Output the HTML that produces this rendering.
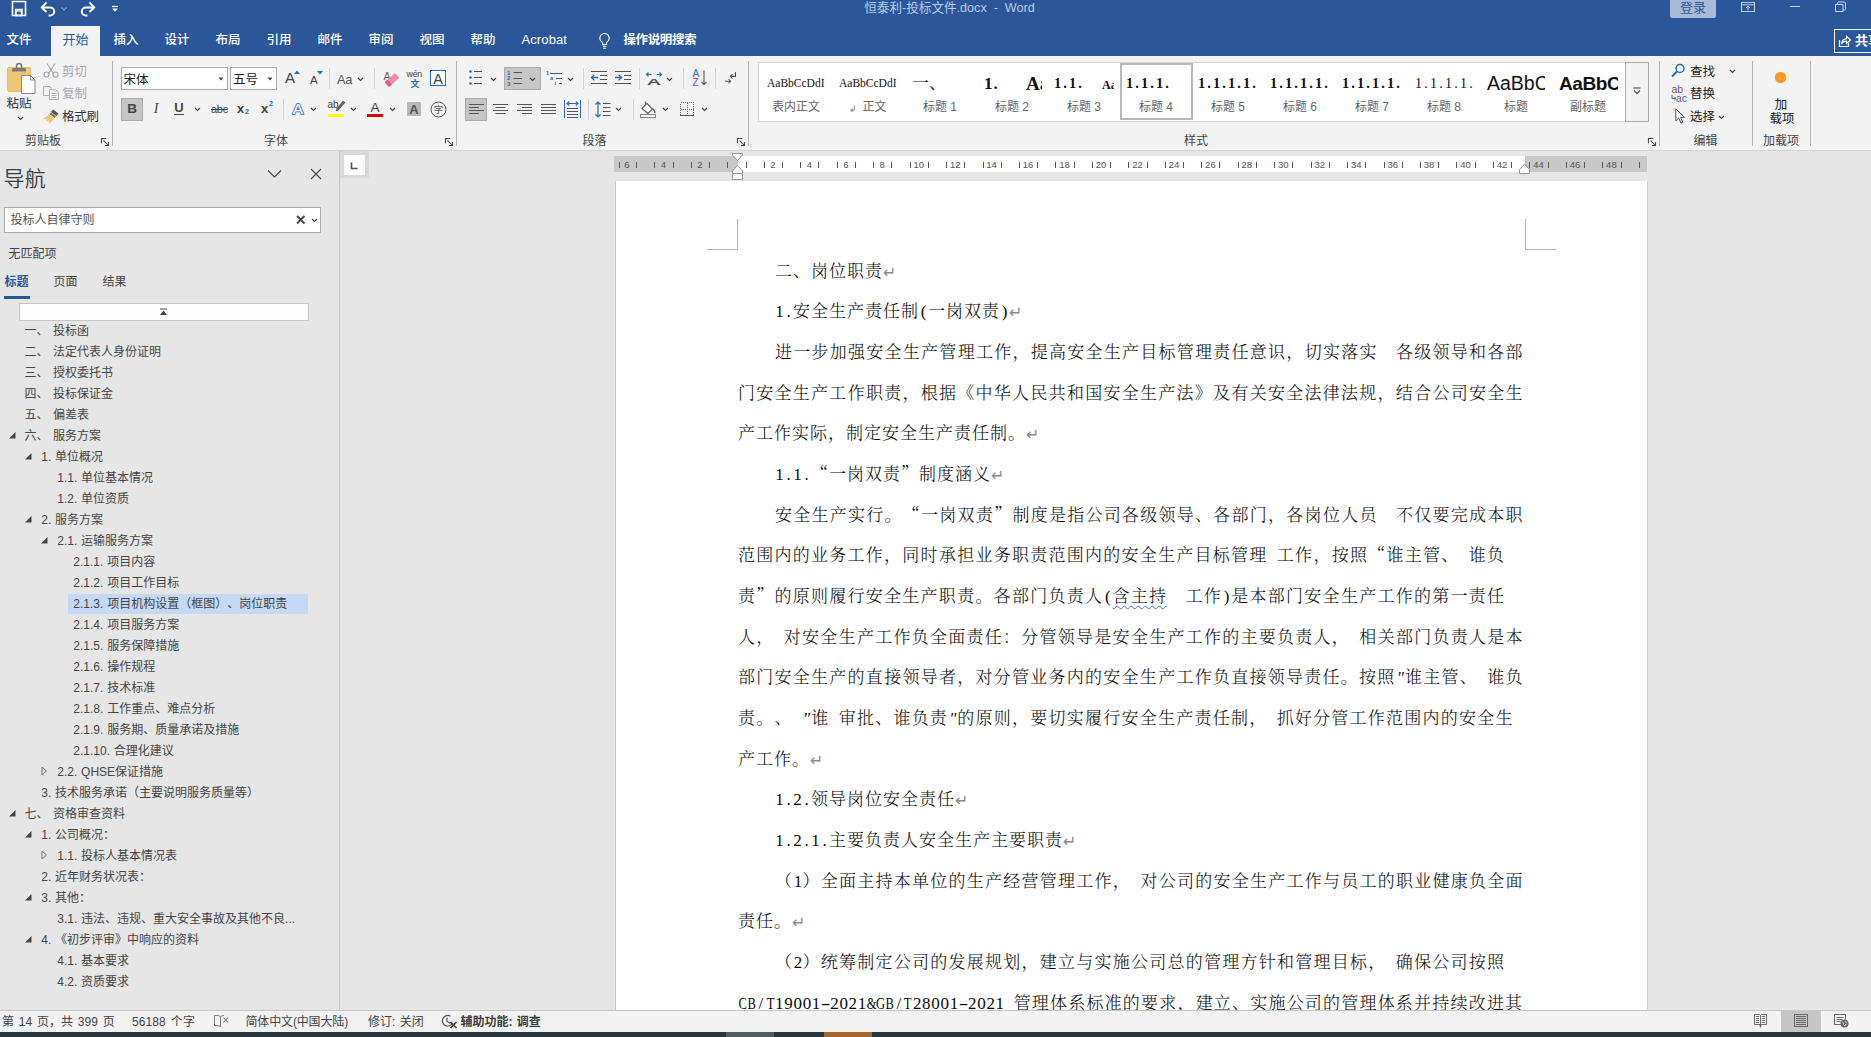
<!DOCTYPE html>
<html lang="zh-CN">
<head>
<meta charset="utf-8">
<title>恒泰利-投标文件.docx - Word</title>
<style>
*{box-sizing:border-box;margin:0;padding:0}
html,body{width:1871px;height:1037px;overflow:hidden;background:#e6e6e6}
body{position:relative;text-spacing-trim:space-all;font-family:"Liberation Sans","Noto Sans CJK SC",sans-serif;font-size:12px;color:#444;-webkit-font-smoothing:antialiased}
.abs{position:absolute}
svg{position:absolute;overflow:visible}
/* ---------- title bar ---------- */
#titlebar{position:absolute;left:0;top:0;width:1871px;height:56px;background:#2b579a}
#title{position:absolute;left:0;width:1871px;top:0;height:17px;line-height:17px;text-align:center;color:#bccae3;font-size:12.6px;padding-left:28px;white-space:pre}
#login{position:absolute;left:1670px;top:-2px;width:46px;height:20px;background:#a9bbd8;border-radius:2px;color:#2b579a;font-size:13px;line-height:19px;text-align:center}
.tab{position:absolute;top:26px;height:30px;line-height:28px;color:#fff;font-size:13px;white-space:nowrap;font-weight:500}
#tabhome{position:absolute;left:51px;top:26px;width:49px;height:30px;background:#f3f3f3;color:#2b579a;font-size:13px;line-height:28px;text-align:center}
#share{position:absolute;left:1834px;top:29px;width:50px;height:24px;border:1px solid #fff;color:#fff;font-size:13px;font-weight:bold;line-height:21px;padding-left:20px}
/* ---------- ribbon ---------- */
#ribbon{position:absolute;left:0;top:56px;width:1871px;height:95px;background:#f3f3f3;border-bottom:1px solid #d4d4d4}
.glabel{position:absolute;top:132px;height:16px;line-height:16px;font-size:12px;color:#444;white-space:nowrap}
.gsep{position:absolute;top:62px;width:1px;height:83px;background:#c8c8c8}
.rt{position:absolute;white-space:nowrap;font-size:12px;color:#333;line-height:16px}
.dis{color:#a6a6a6}
/* ---------- nav pane ---------- */
#nav{position:absolute;left:0;top:151px;width:340px;height:859px;background:#e6e6e6;border-right:1px solid #c6c6c6}
.ni{position:absolute;height:21px;line-height:21px;font-size:12px;color:#444;white-space:nowrap}
/* ---------- doc ---------- */
#page{position:absolute;left:616px;top:181px;width:1031px;height:829px;background:#fff}
.dl{position:absolute;width:900px;height:41px;line-height:41px;font-family:"Liberation Serif","Noto Serif CJK SC",serif;font-size:17px;font-weight:300;color:#0a0a0a;white-space:nowrap;overflow:hidden;text-spacing-trim:space-all;font-kerning:none;--e:0px;letter-spacing:calc(1px + var(--e))}
.dl i{font-style:normal}
.h{display:inline-flex;justify-content:center;width:calc(9px + var(--e));letter-spacing:0;white-space:pre;line-height:1}
.hc{transform:scaleX(.74)}
.hy{transform:scaleX(1.7)}
.f{display:inline-block;width:calc(18px + var(--e));letter-spacing:0;white-space:pre;line-height:1}
.q{font-family:"Noto Serif CJK SC",serif;display:inline-block;width:calc(18px + var(--e));letter-spacing:0;text-spacing-trim:space-all;line-height:1}
.pm{color:#8a8a8a;font-family:"DejaVu Sans",sans-serif;font-size:16px;font-weight:400;letter-spacing:0;margin-left:0;position:relative;top:1px}
.wavy{text-decoration:underline wavy #3a6fd8;text-decoration-thickness:1px;text-underline-offset:3px}
/* ---------- status bar ---------- */
#status{position:absolute;left:0;top:1010px;width:1871px;height:22px;background:#f3f3f3;border-top:1px solid #c6c6c6}
.st{position:absolute;top:1014px;height:16px;line-height:16px;font-size:12px;color:#444;white-space:nowrap}
#taskbar{position:absolute;left:0;top:1032px;width:1871px;height:5px;background:#27373e}
</style>
</head>
<body>
<!-- TITLEBAR -->
<div id="titlebar"></div>
<div id="title">恒泰利-投标文件.docx  -  Word</div>
<div id="login">登录</div>
<!--TABS-->
<div class="tab" style="left:6.5px;font-size:12.5px">文件</div>
<div class="tab" style="left:113.5px;font-size:12.5px">插入</div>
<div class="tab" style="left:164.5px;font-size:12.5px">设计</div>
<div class="tab" style="left:215.5px;font-size:12.5px">布局</div>
<div class="tab" style="left:266.5px;font-size:12.5px">引用</div>
<div class="tab" style="left:317.5px;font-size:12.5px">邮件</div>
<div class="tab" style="left:368.5px;font-size:12.5px">审阅</div>
<div class="tab" style="left:419.5px;font-size:12.5px">视图</div>
<div class="tab" style="left:470.5px;font-size:12.5px">帮助</div>
<div id="tabhome">开始</div>
<div class="tab" style="left:521.5px;font-size:13px;letter-spacing:0.1px">Acrobat</div>
<div class="tab" style="left:623.5px;font-size:12.5px;font-weight:bold;letter-spacing:-0.4px">操作说明搜索</div>
<svg style="left:597px;top:32px" width="15" height="18" viewBox="0 0 15 18"><path d="M7.5 1.5a4.6 4.6 0 0 0-2.6 8.4c.5.5.8 1.2.8 2v.6h3.6v-.6c0-.8.3-1.5.8-2A4.6 4.6 0 0 0 7.5 1.5z" fill="none" stroke="#fff" stroke-width="1.1"/><path d="M5.7 14.3h3.6M6.2 16.2h2.6" stroke="#fff" stroke-width="1.1" fill="none"/></svg>
<svg style="left:10px;top:0px" width="18" height="18" viewBox="0 0 18 18"><path d="M2.5 1.5h13v14h-13z" fill="none" stroke="#fff" stroke-width="1.6"/><path d="M5 9.5h8M6 11v4.5h5.5V11" fill="none" stroke="#fff" stroke-width="1.4"/><rect x="5.5" y="11" width="6.5" height="4.5" fill="none" stroke="#fff" stroke-width="1.3"/></svg>
<svg style="left:40px;top:1px" width="18" height="16" viewBox="0 0 18 16"><path d="M2 6.5h8.2a4 4 0 0 1 0 8H8.5" fill="none" stroke="#fff" stroke-width="2"/><path d="M6.5 1.5L1.8 6.5l4.7 4.4" fill="none" stroke="#fff" stroke-width="2"/></svg>
<svg style="left:60px;top:6px" width="8" height="6" viewBox="0 0 8 6"><path d="M1.5 1.5L4 4l2.5-2.5" fill="none" stroke="#8fa6cf" stroke-width="1.1"/></svg>
<svg style="left:78px;top:1px" width="18" height="16" viewBox="0 0 18 16"><path d="M16 6.5H7.8a4 4 0 0 0 0 8h1.7" fill="none" stroke="#fff" stroke-width="2"/><path d="M11.5 1.5l4.7 5-4.7 4.4" fill="none" stroke="#fff" stroke-width="2"/></svg>
<svg style="left:111px;top:5px" width="8" height="8" viewBox="0 0 8 8"><path d="M1 1.5h6" stroke="#fff" stroke-width="1.2"/><path d="M1 3.6h6L4 6.8z" fill="#fff"/></svg>
<svg style="left:1741px;top:2px" width="14" height="10" viewBox="0 0 14 11" preserveAspectRatio="none"><rect x="0.5" y="0.5" width="13" height="10" fill="none" stroke="#c9d5ea" stroke-width="1"/><path d="M0.5 3h13M7 9V4.5M5 6.5l2-2 2 2" fill="none" stroke="#c9d5ea" stroke-width="1"/></svg>
<div class="abs" style="left:1790px;top:6px;width:10px;height:1px;background:#c9d5ea"></div>
<svg style="left:1835px;top:1px" width="12" height="11" viewBox="0 0 12 11"><path d="M0.5 3.5h7.5v7h-7.5z" fill="none" stroke="#c9d5ea" stroke-width="1"/><path d="M2.5 3.5V2.2a1.2 1.2 0 0 1 1.2-1.2h5.6a1.2 1.2 0 0 1 1.2 1.2v5.6a1.2 1.2 0 0 1-1.2 1.2H8" fill="none" stroke="#c9d5ea" stroke-width="1"/></svg>
<div id="share">共享</div>
<svg style="left:1838px;top:34px" width="14" height="14" viewBox="0 0 14 14"><path d="M1.5 6v6.5h9V9" fill="none" stroke="#fff" stroke-width="1.2"/><path d="M3.5 10c.3-3 2.2-5 5-5.2V2.2L12.5 6 8.500 9.500V7c-2-.1-3.700.800-5 3z" fill="none" stroke="#fff" stroke-width="1.1"/></svg>

<!--RIBBON-->
<div id="ribbon"></div>
<!--RIB1-->
<svg style="left:7px;top:63px" width="30" height="32" viewBox="0 0 30 32"><rect x="0.500" y="4.500" width="23" height="24" rx="1.500" fill="#f0c674" stroke="#ebbd63"/><path d="M5 8.500v-2a1.500 1.500 0 0 1 1.500-1.500h11a1.500 1.500 0 0 1 1.500 1.500v2z" fill="#7a7a7a"/><path d="M9.500 5V3a2.500 2.500 0 0 1 5 0v2" fill="none" stroke="#7a7a7a" stroke-width="1.600"/><path d="M14.500 12.500h9l4.500 4.500V30.500h-13.500z" fill="#fff" stroke="#8a8a8a"/><path d="M23.500 12.500v4.500h4.500" fill="none" stroke="#8a8a8a"/></svg>
<div class="rt" style="left:6.5px;top:96.3px;font-size:12.5px;color:#333">粘贴</div>
<svg style="left:16.5px;top:116px" width="7" height="5" viewBox="0 0 7 5"><path d="M1 1l2.500 2.500L6 1" fill="none" stroke="#444" stroke-width="1.1"/></svg>
<svg style="left:43px;top:63px" width="16" height="15" viewBox="0 0 16 15"><path d="M4 0.500l6.500 10M12 0.500L5.500 10.500" stroke="#a6a6a6" stroke-width="1.200" fill="none"/><circle cx="3.500" cy="11.500" r="2.500" fill="none" stroke="#a6a6a6" stroke-width="1.200"/><circle cx="12.500" cy="11.500" r="2.500" fill="none" stroke="#a6a6a6" stroke-width="1.200"/></svg>
<div class="rt" style="left:62px;top:63.8px;color:#a6a6a6;font-size:12.500px">剪切</div>
<svg style="left:43px;top:86px" width="16" height="14" viewBox="0 0 16 14"><path d="M0.500 0.500h6l2 2V9.500h-8z" fill="#f3f3f3" stroke="#b0b0b0"/><path d="M6.500 3.500h6l3 3V13.500h-9z" fill="#f3f3f3" stroke="#b0b0b0"/><path d="M8.500 7.500h5M8.500 9.500h5M8.500 11.500h5" stroke="#b0b0b0" stroke-width="1"/></svg>
<div class="rt" style="left:62px;top:86.3px;color:#a6a6a6;font-size:12.500px">复制</div>
<svg style="left:43px;top:108px" width="17" height="16" viewBox="0 0 17 16"><path d="M10 1.500l5.500 4-2 2.500-5.500-4z" fill="#555"/><path d="M8 4.500l5 3.700-1.300 1.800-5-3.700z" fill="#777"/><path d="M6.500 6.500l5 3.700-4.500 5.300-1.500-1 1-1.500-2 .5-1.500-1 1-1.500-2.500.300-1-.800z" fill="#f0c674"/></svg>
<div class="rt" style="left:62px;top:109.1px;font-size:12.500px;color:#333;letter-spacing:-0.300px">格式刷</div>
<div class="rt" style="left:25px;top:133.0px;color:#444">剪贴板</div>
<svg style="left:100.5px;top:138.0px" width="8" height="8" viewBox="0 0 9 9"><path d="M0.500 6V0.500H6" fill="none" stroke="#444" stroke-width="1.150"/><path d="M3 3l5 5M8.500 4.500v4h-4" fill="none" stroke="#444" stroke-width="1.150"/></svg>
<div class="abs" style="left:112px;top:61px;width:1px;height:85px;background:#b4b4b4"></div>
<div class="abs" style="left:121px;top:67px;width:107px;height:23px;background:#fff;border:1px solid #ababab"></div>
<div class="rt" style="left:123.5px;top:71.8px;color:#222;font-size:12.5px">宋体</div>
<svg style="left:217.5px;top:77.0px" width="6" height="4" viewBox="0 0 6 4"><path d="M0.500 0.500h5L3 3.500z" fill="#444"/></svg>
<div class="abs" style="left:230px;top:67px;width:47px;height:23px;background:#fff;border:1px solid #ababab"></div>
<div class="rt" style="left:233px;top:71.8px;color:#222;font-size:12.5px">五号</div>
<svg style="left:266.5px;top:77.0px" width="6" height="4" viewBox="0 0 6 4"><path d="M0.500 0.500h5L3 3.500z" fill="#444"/></svg>
<div class="rt" style="left:285px;top:69px;font-size:15px;line-height:18px;color:#444">A</div>
<svg style="left:294px;top:70px" width="6" height="4" viewBox="0 0 6 4"><path d="M0 4L3 0.500 6 4z" fill="#2b6cb8"/></svg>
<div class="rt" style="left:310px;top:72px;font-size:11.500px;line-height:16px;color:#444">A</div>
<svg style="left:317px;top:70.5px" width="6" height="4" viewBox="0 0 6 4"><path d="M0 0L3 3.500 6 0z" fill="#2b6cb8"/></svg>
<div class="abs" style="left:329px;top:68px;width:1px;height:21px;background:#d4d4d4"></div>
<div class="rt" style="left:337px;top:70.500px;font-size:12.800px;line-height:18px;color:#555;letter-spacing:-0.300px">Aa</div>
<svg style="left:357.0px;top:76.5px" width="7" height="5" viewBox="0 0 7 5"><path d="M1 1l2.500 2.500L6 1" fill="none" stroke="#444" stroke-width="1.1"/></svg>
<div class="abs" style="left:374px;top:68px;width:1px;height:21px;background:#d4d4d4"></div>
<div class="rt" style="left:383.500px;top:69px;font-size:10.500px;line-height:14px;color:#666">A</div>
<svg style="left:384px;top:72px" width="16" height="15" viewBox="0 0 16 15"><g transform="rotate(-42 8 8)"><rect x="1" y="4.700" width="14" height="6.600" rx="1.200" fill="#ef8fa3"/><rect x="1" y="4.700" width="4" height="6.600" rx="1.200" fill="#e5607c"/></g></svg>
<div class="rt" style="left:406.500px;top:68px;font-size:8.800px;line-height:12px;color:#444;letter-spacing:-0.200px">wén</div>
<div class="rt" style="left:410.500px;top:77.500px;font-size:9px;line-height:12px;color:#2b6cb8;font-weight:bold">文</div>
<div class="abs" style="left:430px;top:70px;width:16px;height:16px;border:1px solid #2b6cb8;background:#fff"></div>
<div class="rt" style="left:430px;top:70.500px;width:16px;text-align:center;font-size:14.500px;line-height:16px;color:#444">A</div>
<div class="abs" style="left:121px;top:98px;width:22px;height:23px;background:#c6c6c6;border:1px solid #ababab"></div>
<div class="rt" style="left:121px;top:101px;width:22px;text-align:center;font-size:13.500px;line-height:16px;color:#444;font-weight:bold">B</div>
<div class="rt" style="left:150px;top:101px;width:12px;text-align:center;font-size:14px;line-height:16px;color:#444;font-style:italic;font-family:'Liberation Serif',serif;">I</div>
<div class="rt" style="left:173px;top:100px;width:12px;text-align:center;font-size:13px;line-height:16px;color:#444;font-weight:bold">U</div>
<div class="abs" style="left:174px;top:114px;width:10px;height:1px;background:#444"></div>
<svg style="left:194.0px;top:107px" width="7" height="5" viewBox="0 0 7 5"><path d="M1 1l2.500 2.500L6 1" fill="none" stroke="#444" stroke-width="1.1"/></svg>
<div class="rt" style="left:211px;top:101px;font-size:11px;line-height:16px;color:#444;text-decoration:line-through;letter-spacing:-0.3px">abc</div>
<div class="rt" style="left:237px;top:101px;font-size:13px;line-height:16px;color:#444;font-weight:bold">x</div>
<div class="rt" style="left:245px;top:108px;font-size:7px;line-height:8px;color:#2b6cb8;font-weight:bold">2</div>
<div class="rt" style="left:261px;top:101px;font-size:13px;line-height:16px;color:#444;font-weight:bold">x</div>
<div class="rt" style="left:269px;top:100px;font-size:7px;line-height:8px;color:#2b6cb8;font-weight:bold">2</div>
<div class="abs" style="left:282.5px;top:99px;width:1px;height:21px;background:#d4d4d4"></div>
<svg style="left:289px;top:99px" width="18" height="20" viewBox="0 0 18 20"><text x="9" y="15" text-anchor="middle" font-family="Liberation Sans,sans-serif" font-size="15.500" fill="#fff" stroke="#4a86d4" stroke-width="2.200" stroke-linejoin="round" paint-order="stroke">A</text></svg>
<svg style="left:310.0px;top:107px" width="7" height="5" viewBox="0 0 7 5"><path d="M1 1l2.500 2.500L6 1" fill="none" stroke="#444" stroke-width="1.1"/></svg>
<div class="rt" style="left:327.500px;top:99px;font-size:10px;line-height:12px;color:#444">ab</div>
<svg style="left:332px;top:100px" width="14" height="13" viewBox="0 0 14 13"><path d="M11 0.500l2.300 2L6.500 10.500 3.500 11.500l1-3z" fill="#666"/></svg>
<div class="abs" style="left:328px;top:113.500px;width:16px;height:3.500px;background:#ffff00"></div>
<svg style="left:350.2px;top:107px" width="7" height="5" viewBox="0 0 7 5"><path d="M1 1l2.500 2.500L6 1" fill="none" stroke="#444" stroke-width="1.1"/></svg>
<div class="rt" style="left:367px;top:100px;width:16px;text-align:center;font-size:13.500px;line-height:16px;color:#444">A</div>
<div class="abs" style="left:367px;top:113.500px;width:16px;height:3.500px;background:#e30000"></div>
<svg style="left:389.1px;top:107px" width="7" height="5" viewBox="0 0 7 5"><path d="M1 1l2.500 2.500L6 1" fill="none" stroke="#444" stroke-width="1.1"/></svg>
<div class="abs" style="left:407px;top:102px;width:14px;height:13.500px;background:#b8b8b8"></div>
<div class="rt" style="left:407px;top:101.500px;width:14px;text-align:center;font-size:13px;line-height:16px;color:#555;font-weight:bold">A</div>
<svg style="left:430px;top:101px" width="17" height="17" viewBox="0 0 17 17"><circle cx="8.500" cy="8.500" r="7.500" fill="none" stroke="#555" stroke-width="1"/><text x="8.500" y="12" text-anchor="middle" font-family="Noto Sans CJK SC,sans-serif" font-size="9.500" fill="#555">字</text></svg>
<div class="rt" style="left:264px;top:133.0px;color:#444">字体</div>
<svg style="left:444.5px;top:138.0px" width="8" height="8" viewBox="0 0 9 9"><path d="M0.500 6V0.500H6" fill="none" stroke="#444" stroke-width="1.150"/><path d="M3 3l5 5M8.500 4.500v4h-4" fill="none" stroke="#444" stroke-width="1.150"/></svg>
<div class="abs" style="left:456px;top:61px;width:1px;height:85px;background:#b4b4b4"></div>
<!--/RIB1-->
<!--RIB2-->
<svg style="left:468px;top:69px" width="16" height="17" viewBox="0 0 16 17"><circle cx="2.500" cy="2.500" r="1.300" fill="#2b6cb8"/><circle cx="2.500" cy="8.500" r="1.300" fill="#2b6cb8"/><circle cx="2.500" cy="14.500" r="1.300" fill="#2b6cb8"/><path d="M6 2.500h8M6 8.500h8M6 14.500h8" stroke="#555" stroke-width="1"/></svg>
<svg style="left:490.0px;top:76.5px" width="7" height="5" viewBox="0 0 7 5"><path d="M1 1l2.500 2.500L6 1" fill="none" stroke="#444" stroke-width="1.1"/></svg>
<div class="abs" style="left:504px;top:67px;width:37px;height:23px;background:#c6c6c6;border:1px solid #ababab"></div>
<svg style="left:507px;top:69px" width="17" height="17" viewBox="0 0 17 17"><text x="0" y="5.500" font-family="Liberation Sans,sans-serif" font-size="6" font-weight="bold" fill="#2b6cb8">1</text><text x="0" y="11" font-family="Liberation Sans,sans-serif" font-size="6" font-weight="bold" fill="#2b6cb8">2</text><text x="0" y="16.500" font-family="Liberation Sans,sans-serif" font-size="6" font-weight="bold" fill="#2b6cb8">3</text><path d="M6.500 3.500h8.500M6.500 9.500h8.500M6.500 14.500h8.500" stroke="#555" stroke-width="1"/></svg>
<svg style="left:529.0px;top:76.5px" width="7" height="5" viewBox="0 0 7 5"><path d="M1 1l2.500 2.500L6 1" fill="none" stroke="#444" stroke-width="1.1"/></svg>
<svg style="left:546px;top:70px" width="17" height="16" viewBox="0 0 17 16"><text x="0" y="5" font-family="Liberation Sans,sans-serif" font-size="5.500" font-weight="bold" fill="#2b6cb8">1</text><text x="4" y="10" font-family="Liberation Sans,sans-serif" font-size="5.500" font-weight="bold" fill="#2b6cb8">a</text><text x="8.500" y="15" font-family="Liberation Sans,sans-serif" font-size="5.500" font-weight="bold" fill="#2b6cb8">i</text><path d="M4 3.500h12M10 8.500h6M13 13.500h3" stroke="#555" stroke-width="1"/></svg>
<svg style="left:566.5px;top:76.5px" width="7" height="5" viewBox="0 0 7 5"><path d="M1 1l2.500 2.500L6 1" fill="none" stroke="#444" stroke-width="1.1"/></svg>
<div class="abs" style="left:583px;top:68px;width:1px;height:21px;background:#d4d4d4"></div>
<svg style="left:590px;top:70px" width="18" height="15" viewBox="0 0 18 15"><path d="M1 1.500h16M10 5.500h7M10 9.500h7M1 13.500h16" stroke="#555" stroke-width="1"/><path d="M8 7.500H1.500M4.300 4.700L1.500 7.500l2.800 2.800" fill="none" stroke="#2b6cb8" stroke-width="1.300"/></svg>
<svg style="left:614px;top:70px" width="18" height="15" viewBox="0 0 18 15"><path d="M1 1.500h16M10 5.500h7M10 9.500h7M1 13.500h16" stroke="#555" stroke-width="1"/><path d="M1 7.500h6.500M4.700 4.700L7.500 7.500 4.700 10.300" fill="none" stroke="#2b6cb8" stroke-width="1.300"/></svg>
<div class="abs" style="left:638.5px;top:68px;width:1px;height:21px;background:#d4d4d4"></div>
<svg style="left:645px;top:69px" width="18" height="17" viewBox="0 0 18 17"><g transform="translate(9 15.500) scale(1.420 0.700)"><text x="0" y="0" text-anchor="middle" font-family="Liberation Sans,sans-serif" font-size="14" font-weight="bold" fill="#555">A</text></g><path d="M1.500 5.500h5M3.500 3.500l-2 2 2 2M16.500 5.500h-5M14.500 3.500l2 2-2 2" fill="none" stroke="#2b6cb8" stroke-width="1.200"/></svg>
<svg style="left:666.0px;top:76.5px" width="7" height="5" viewBox="0 0 7 5"><path d="M1 1l2.500 2.500L6 1" fill="none" stroke="#444" stroke-width="1.1"/></svg>
<div class="abs" style="left:683px;top:68px;width:1px;height:21px;background:#d4d4d4"></div>
<div class="rt" style="left:692.500px;top:68px;font-size:10px;line-height:11px;color:#2b6cb8">A</div>
<div class="rt" style="left:692.500px;top:76.500px;font-size:10px;line-height:11px;color:#8e44ad">Z</div>
<svg style="left:700px;top:70px" width="8" height="16" viewBox="0 0 8 16"><path d="M4 0.500v14M1.500 12l2.500 2.500 2.500-2.500" fill="none" stroke="#555" stroke-width="1.100"/></svg>
<div class="abs" style="left:714.5px;top:68px;width:1px;height:21px;background:#d4d4d4"></div>
<svg style="left:724px;top:71px" width="13" height="15" viewBox="0 0 13 14" preserveAspectRatio="none"><path d="M11.500 1v4H6.500M8.500 3L6.300 5l2.200 2" fill="none" stroke="#555" stroke-width="1"/><path d="M1 9.500h5.500M4.500 7.500l2.200 2-2.200 2" fill="none" stroke="#555" stroke-width="1"/></svg>
<div class="abs" style="left:465px;top:98px;width:22px;height:23px;background:#c6c6c6;border:1px solid #ababab"></div>
<svg style="left:468.5px;top:102px" width="16" height="14" viewBox="0 0 16 14"><path d="M0 2.5h15M0 5.5h10M0 8.5h15M0 11.5h10" stroke="#555" stroke-width="1"/></svg>
<svg style="left:492.5px;top:102px" width="16" height="14" viewBox="0 0 16 14"><path d="M0 2.5h15M2.5 5.5h10.0M0 8.5h15M2.5 11.5h10.0" stroke="#555" stroke-width="1"/></svg>
<svg style="left:516.5px;top:102px" width="16" height="14" viewBox="0 0 16 14"><path d="M0 2.5h15M5 5.5h10M0 8.5h15M5 11.5h10" stroke="#555" stroke-width="1"/></svg>
<svg style="left:540.5px;top:102px" width="16" height="14" viewBox="0 0 16 14"><path d="M0 2.5h15M0 5.5h15M0 8.5h15M0 11.5h15" stroke="#555" stroke-width="1"/></svg>
<svg style="left:563.500px;top:100px" width="17" height="18" viewBox="0 0 17 18"><path d="M0.500 0v18M16.500 0v18" stroke="#2b6cb8" stroke-width="1"/><path d="M3 3.500h11M5.200 1.500L3 3.500l2.200 2M11.800 1.500l2.200 2-2.200 2" fill="none" stroke="#2b6cb8" stroke-width="1.100"/><path d="M3 8.500h11M3 11.500h11M3 14.500h11M3 17.500h11" stroke="#555" stroke-width="1"/></svg>
<div class="abs" style="left:587.5px;top:99px;width:1px;height:21px;background:#d4d4d4"></div>
<svg style="left:595px;top:101px" width="16" height="17" viewBox="0 0 16 17"><path d="M3 1v15M0.500 3.500L3 1l2.500 2.500M0.500 13.500L3 16l2.500-2.500" fill="none" stroke="#2b6cb8" stroke-width="1.200"/><path d="M8 2.500h7.500M8 6.500h7.500M8 10.500h7.500M8 14.500h7.500" stroke="#555" stroke-width="1"/></svg>
<svg style="left:615.0px;top:107px" width="7" height="5" viewBox="0 0 7 5"><path d="M1 1l2.500 2.500L6 1" fill="none" stroke="#444" stroke-width="1.1"/></svg>
<div class="abs" style="left:632.5px;top:99px;width:1px;height:21px;background:#d4d4d4"></div>
<svg style="left:639px;top:100px" width="18" height="18" viewBox="0 0 18 18"><path d="M6.500 1.500v4M3 8.500l5-5 5.500 5.500-4.500 4.500z" fill="#fff" stroke="#555" stroke-width="1.100"/><path d="M13.500 8.500c1.500 1.200 2.500 2.600 2.500 4.500" fill="none" stroke="#2b6cb8" stroke-width="1.600"/><rect x="1.500" y="14.500" width="15" height="3" fill="#fff" stroke="#888" stroke-width="1"/></svg>
<svg style="left:662.0px;top:107px" width="7" height="5" viewBox="0 0 7 5"><path d="M1 1l2.500 2.500L6 1" fill="none" stroke="#444" stroke-width="1.1"/></svg>
<svg style="left:680px;top:102px" width="14" height="14" viewBox="0 0 14 14"><path d="M0.500 0.500h13v13h-13zM7 0.500v13M0.500 7h13" fill="none" stroke="#666" stroke-width="1" stroke-dasharray="1 1" shape-rendering="crispEdges"/><path d="M0 13.500h14" stroke="#555" stroke-width="1"/></svg>
<svg style="left:700.7px;top:107px" width="7" height="5" viewBox="0 0 7 5"><path d="M1 1l2.500 2.500L6 1" fill="none" stroke="#444" stroke-width="1.1"/></svg>
<div class="rt" style="left:582.5px;top:133.0px;color:#444">段落</div>
<svg style="left:736.5px;top:138.0px" width="8" height="8" viewBox="0 0 9 9"><path d="M0.500 6V0.500H6" fill="none" stroke="#444" stroke-width="1.150"/><path d="M3 3l5 5M8.500 4.500v4h-4" fill="none" stroke="#444" stroke-width="1.150"/></svg>
<div class="abs" style="left:748px;top:61px;width:1px;height:85px;background:#b4b4b4"></div>
<!--/RIB2-->
<!--RIB3-->
<div class="abs" style="left:758px;top:62px;width:868px;height:60px;background:#fff;border:1px solid #d4d4d4"></div>
<div class="abs" style="left:1120px;top:63px;width:73px;height:57px;background:#fff;border:2px solid #b9b9b9"></div>
<div class="abs" style="left:760px;top:70px;width:72px;height:28px;overflow:hidden"><div class="abs" style="left:7px;top:0;height:28px;line-height:27px;white-space:nowrap;font-family:'Liberation Serif','Noto Serif CJK SC',serif;font-size:11.500px;color:#111;">AaBbCcDdI</div></div>
<div class="rt" style="left:760px;top:99px;width:72px;text-align:center;color:#666;font-size:12px">表内正文</div>
<div class="abs" style="left:832px;top:70px;width:72px;height:28px;overflow:hidden"><div class="abs" style="left:7px;top:0;height:28px;line-height:27px;white-space:nowrap;font-family:'Liberation Serif','Noto Serif CJK SC',serif;font-size:11.500px;color:#111;">AaBbCcDdI</div></div>
<div class="rt" style="left:832px;top:99px;width:72px;text-align:center;color:#666;font-size:12px"><span style="font-size:9px;color:#777;margin-right:5px;position:relative;top:1px">↲</span>正文</div>
<div class="abs" style="left:904px;top:70px;width:72px;height:28px;overflow:hidden"><div class="abs" style="left:8px;top:0;height:28px;line-height:27px;white-space:nowrap;font-family:'Liberation Serif','Noto Serif CJK SC',serif;font-size:17px;color:#111;">一、</div></div>
<div class="rt" style="left:904px;top:99px;width:72px;text-align:center;color:#666;font-size:12px">标题 1</div>
<div class="abs" style="left:976px;top:70px;width:72px;height:28px;overflow:hidden"><div class="abs" style="left:8px;top:0;height:28px;line-height:27px;white-space:nowrap;font-family:'Liberation Serif','Noto Serif CJK SC',serif;font-size:17px;font-weight:bold;color:#111;letter-spacing:1px;">1.</div><div class="abs" style="left:50px;top:0;height:28px;line-height:27px;white-space:nowrap;font-family:'Liberation Serif','Noto Serif CJK SC',serif;font-size:19px;font-weight:bold;color:#111;width:15.500px;overflow:hidden">Aa</div></div>
<div class="rt" style="left:976px;top:99px;width:72px;text-align:center;color:#666;font-size:12px">标题 2</div>
<div class="abs" style="left:1048px;top:70px;width:72px;height:28px;overflow:hidden"><div class="abs" style="left:6px;top:0;height:28px;line-height:27px;white-space:nowrap;font-family:'Liberation Serif','Noto Serif CJK SC',serif;font-size:14.500px;font-weight:bold;color:#111;letter-spacing:2.050px;">1.1.</div><div class="abs" style="left:54px;top:2px;height:28px;line-height:27px;white-space:nowrap;font-family:'Liberation Serif','Noto Serif CJK SC',serif;font-size:12px;font-weight:bold;color:#111;width:11.500px;overflow:hidden">Aa</div></div>
<div class="rt" style="left:1048px;top:99px;width:72px;text-align:center;color:#666;font-size:12px">标题 3</div>
<div class="abs" style="left:1120px;top:70px;width:72px;height:28px;overflow:hidden"><div class="abs" style="left:6px;top:0;height:28px;line-height:27px;white-space:nowrap;font-family:'Liberation Serif','Noto Serif CJK SC',serif;font-size:14.500px;font-weight:bold;color:#111;letter-spacing:2.050px;">1.1.1.</div></div>
<div class="rt" style="left:1120px;top:99px;width:72px;text-align:center;color:#666;font-size:12px">标题 4</div>
<div class="abs" style="left:1192px;top:70px;width:72px;height:28px;overflow:hidden"><div class="abs" style="left:6px;top:0;height:28px;line-height:27px;white-space:nowrap;font-family:'Liberation Serif','Noto Serif CJK SC',serif;font-size:14.500px;font-weight:bold;color:#111;letter-spacing:2.050px;">1.1.1.1.</div></div>
<div class="rt" style="left:1192px;top:99px;width:72px;text-align:center;color:#666;font-size:12px">标题 5</div>
<div class="abs" style="left:1264px;top:70px;width:72px;height:28px;overflow:hidden"><div class="abs" style="left:6px;top:0;height:28px;line-height:27px;white-space:nowrap;font-family:'Liberation Serif','Noto Serif CJK SC',serif;font-size:14.500px;font-weight:bold;color:#111;letter-spacing:2.050px;">1.1.1.1.</div></div>
<div class="rt" style="left:1264px;top:99px;width:72px;text-align:center;color:#666;font-size:12px">标题 6</div>
<div class="abs" style="left:1336px;top:70px;width:72px;height:28px;overflow:hidden"><div class="abs" style="left:6px;top:0;height:28px;line-height:27px;white-space:nowrap;font-family:'Liberation Serif','Noto Serif CJK SC',serif;font-size:14.500px;font-weight:bold;color:#111;letter-spacing:2.050px;">1.1.1.1.</div></div>
<div class="rt" style="left:1336px;top:99px;width:72px;text-align:center;color:#666;font-size:12px">标题 7</div>
<div class="abs" style="left:1408px;top:70px;width:72px;height:28px;overflow:hidden"><div class="abs" style="left:7px;top:0;height:28px;line-height:27px;white-space:nowrap;font-family:'Liberation Serif','Noto Serif CJK SC',serif;font-size:14px;color:#111;letter-spacing:2.250px;">1.1.1.1.</div></div>
<div class="rt" style="left:1408px;top:99px;width:72px;text-align:center;color:#666;font-size:12px">标题 8</div>
<div class="abs" style="left:1480px;top:70px;width:72px;height:28px;overflow:hidden"><div class="abs" style="left:7px;top:0;height:28px;line-height:27px;white-space:nowrap;font-family:'Liberation Sans','Noto Sans CJK SC',sans-serif;font-size:19.500px;color:#111;width:58px;overflow:hidden;">AaBbC</div></div>
<div class="rt" style="left:1480px;top:99px;width:72px;text-align:center;color:#666;font-size:12px">标题</div>
<div class="abs" style="left:1552px;top:70px;width:72px;height:28px;overflow:hidden"><div class="abs" style="left:7px;top:0;height:28px;line-height:27px;white-space:nowrap;font-family:'Liberation Sans','Noto Sans CJK SC',sans-serif;font-size:19px;font-weight:bold;color:#111;letter-spacing:-0.400px;width:58.500px;overflow:hidden;">AaBbC</div></div>
<div class="rt" style="left:1552px;top:99px;width:72px;text-align:center;color:#666;font-size:12px">副标题</div>
<div class="abs" style="left:1625px;top:62px;width:24px;height:60px;background:#f3f3f3;border:1px solid #ababab"></div>
<svg style="left:1633px;top:87px" width="8" height="8" viewBox="0 0 8 8"><path d="M0.500 1h7" stroke="#444" stroke-width="1.100"/><path d="M1 3.500l3 3 3-3" fill="none" stroke="#444" stroke-width="1.100"/></svg>
<div class="rt" style="left:1184px;top:133.10000000000002px;color:#444">样式</div>
<svg style="left:1647.5px;top:138.0px" width="8" height="8" viewBox="0 0 9 9"><path d="M0.500 6V0.500H6" fill="none" stroke="#444" stroke-width="1.150"/><path d="M3 3l5 5M8.500 4.500v4h-4" fill="none" stroke="#444" stroke-width="1.150"/></svg>
<div class="abs" style="left:1659px;top:61px;width:1px;height:85px;background:#b4b4b4"></div>
<svg style="left:1671px;top:63px" width="15" height="15" viewBox="0 0 15 15"><circle cx="9" cy="5.500" r="4" fill="none" stroke="#2b6cb8" stroke-width="1.500"/><path d="M6 8.500L1 13.500" stroke="#2b6cb8" stroke-width="2"/></svg>
<div class="rt" style="left:1690px;top:63.5px;color:#222;font-size:12.500px">查找</div>
<svg style="left:1729.0px;top:68.5px" width="7" height="5" viewBox="0 0 7 5"><path d="M1 1l2.500 2.500L6 1" fill="none" stroke="#444" stroke-width="1.1"/></svg>
<div class="rt" style="left:1671.500px;top:84px;font-size:10.500px;line-height:11px;color:#666"><span>a</span><span style="color:#8e44ad">b</span></div>
<div class="rt" style="left:1676px;top:92.500px;font-size:10.500px;line-height:11px;color:#666"><span>a</span><span style="color:#2b6cb8">c</span></div>
<svg style="left:1671px;top:95px" width="6" height="6" viewBox="0 0 6 6"><path d="M1 0v3.500h4M3.200 1.700L5 3.500 3.200 5.300" fill="none" stroke="#2b6cb8" stroke-width="1"/></svg>
<div class="rt" style="left:1690px;top:86.39999999999999px;color:#222;font-size:12.500px">替换</div>
<svg style="left:1675px;top:108px" width="11" height="16" viewBox="0 0 11 16"><path d="M0.800 0.800v12l3-2.800 2.200 5 1.800-.800-2.200-4.800h4z" fill="#fff" stroke="#555" stroke-width="1"/></svg>
<div class="rt" style="left:1690px;top:109.0px;color:#222;font-size:12.500px">选择</div>
<svg style="left:1717.5px;top:114.5px" width="7" height="5" viewBox="0 0 7 5"><path d="M1 1l2.500 2.500L6 1" fill="none" stroke="#444" stroke-width="1.1"/></svg>
<div class="rt" style="left:1693.5px;top:133.0px;color:#444">编辑</div>
<div class="abs" style="left:1752px;top:61px;width:1px;height:85px;background:#b4b4b4"></div>
<div class="abs" style="left:1775px;top:72px;width:11px;height:11px;border-radius:6px;background:#ff9a1f;box-shadow:0 0 1px #ffb85c"></div>
<div class="rt" style="left:1769px;top:97.1px;color:#222;width:24px;text-align:center;font-size:12.500px">加</div>
<div class="rt" style="left:1769.5px;top:110.5px;color:#222;font-size:12.500px">载项</div>
<div class="rt" style="left:1763px;top:133.0px;color:#444">加载项</div>
<div class="abs" style="left:1810px;top:61px;width:1px;height:85px;background:#b4b4b4"></div>
<!--/RIB3-->
<!--NAV-->
<div id="nav"></div>
<div class="abs" style="left:3.5px;top:164.5px;font-size:21px;line-height:28px;color:#3b3b3b;font-weight:350;white-space:nowrap;letter-spacing:0.3px">导航</div>
<svg style="left:267px;top:169px" width="15" height="10" viewBox="0 0 15 10"><path d="M1 1.500l6.500 6.500 6.500-6.500" fill="none" stroke="#444" stroke-width="1.100"/></svg>
<svg style="left:310px;top:168px" width="12" height="12" viewBox="0 0 12 12"><path d="M1 1l10 10M11 1L1 11" fill="none" stroke="#444" stroke-width="1.100"/></svg>
<div class="abs" style="left:4px;top:207px;width:317px;height:26px;background:#fff;border:1px solid #ababab"></div>
<div class="ni" style="left:10.5px;top:209.5px;color:#555">投标人自律守则</div>
<svg style="left:296px;top:215px" width="10" height="10" viewBox="0 0 10 10"><path d="M1 1l7.500 7.500M8.500 1L1 8.500" fill="none" stroke="#444" stroke-width="1.800"/></svg>
<svg style="left:311px;top:218px" width="7" height="5" viewBox="0 0 7 5"><path d="M1 1l2.500 2.500L6 1" fill="none" stroke="#444" stroke-width="1.100"/></svg>
<div class="ni" style="left:8.5px;top:243.5px;color:#444">无匹配项</div>
<div class="ni" style="left:4.5px;top:272.3px;color:#2b579a;font-weight:bold">标题</div>
<div class="ni" style="left:53.5px;top:272.3px">页面</div>
<div class="ni" style="left:102.5px;top:272.3px">结果</div>
<div class="abs" style="left:4px;top:296px;width:26px;height:3px;background:#2b579a"></div>
<div class="abs" style="left:19px;top:303px;width:290px;height:18px;background:#fdfdfd;border:1px solid #c6c6c6"></div>
<svg style="left:159px;top:308px" width="9" height="8" viewBox="0 0 9 8"><path d="M1 1h7" stroke="#444" stroke-width="1"/><path d="M1 7l3.500-4.500L8 7z" fill="#444"/></svg>
<div class="ni" style="left:24.5px;top:321px">一、<span style="display:inline-block;width:4.500px"></span>投标函</div>
<div class="ni" style="left:24.5px;top:342px">二、<span style="display:inline-block;width:4.500px"></span>法定代表人身份证明</div>
<div class="ni" style="left:24.5px;top:363px">三、<span style="display:inline-block;width:4.500px"></span>授权委托书</div>
<div class="ni" style="left:24.5px;top:384px">四、<span style="display:inline-block;width:4.500px"></span>投标保证金</div>
<div class="ni" style="left:24.5px;top:405px">五、<span style="display:inline-block;width:4.500px"></span>偏差表</div>
<svg style="left:8.5px;top:432px" width="7" height="7" viewBox="0 0 7 7"><path d="M6.500 0v6.500h-6.500z" fill="#444"/></svg>
<div class="ni" style="left:24.5px;top:426px">六、<span style="display:inline-block;width:4.500px"></span>服务方案</div>
<svg style="left:24.5px;top:453px" width="7" height="7" viewBox="0 0 7 7"><path d="M6.500 0v6.500h-6.500z" fill="#444"/></svg>
<div class="ni" style="left:41.3px;top:447px">1.<span style="display:inline-block;width:3.800px"></span>单位概况</div>
<div class="ni" style="left:57.3px;top:468px">1.1.<span style="display:inline-block;width:3.800px"></span>单位基本情况</div>
<div class="ni" style="left:57.3px;top:489px">1.2.<span style="display:inline-block;width:3.800px"></span>单位资质</div>
<svg style="left:24.5px;top:516px" width="7" height="7" viewBox="0 0 7 7"><path d="M6.500 0v6.500h-6.500z" fill="#444"/></svg>
<div class="ni" style="left:41.3px;top:510px">2.<span style="display:inline-block;width:3.800px"></span>服务方案</div>
<svg style="left:40.5px;top:537px" width="7" height="7" viewBox="0 0 7 7"><path d="M6.500 0v6.500h-6.500z" fill="#444"/></svg>
<div class="ni" style="left:57.3px;top:531px">2.1.<span style="display:inline-block;width:3.800px"></span>运输服务方案</div>
<div class="ni" style="left:73.3px;top:552px">2.1.1.<span style="display:inline-block;width:3.800px"></span>项目内容</div>
<div class="ni" style="left:73.3px;top:573px">2.1.2.<span style="display:inline-block;width:3.800px"></span>项目工作目标</div>
<div class="abs" style="left:68px;top:594px;width:240px;height:20px;background:#c5d9f5"></div>
<div class="ni" style="left:73.3px;top:594px">2.1.3.<span style="display:inline-block;width:3.800px"></span>项目机构设置（框图）、岗位职责</div>
<div class="ni" style="left:73.3px;top:615px">2.1.4.<span style="display:inline-block;width:3.800px"></span>项目服务方案</div>
<div class="ni" style="left:73.3px;top:636px">2.1.5.<span style="display:inline-block;width:3.800px"></span>服务保障措施</div>
<div class="ni" style="left:73.3px;top:657px">2.1.6.<span style="display:inline-block;width:3.800px"></span>操作规程</div>
<div class="ni" style="left:73.3px;top:678px">2.1.7.<span style="display:inline-block;width:3.800px"></span>技术标准</div>
<div class="ni" style="left:73.3px;top:699px">2.1.8.<span style="display:inline-block;width:3.800px"></span>工作重点、难点分析</div>
<div class="ni" style="left:73.3px;top:720px">2.1.9.<span style="display:inline-block;width:3.800px"></span>服务期、质量承诺及措施</div>
<div class="ni" style="left:73.3px;top:741px">2.1.10.<span style="display:inline-block;width:3.800px"></span>合理化建议</div>
<svg style="left:41px;top:766px" width="7" height="10" viewBox="0 0 7 10"><path d="M1 1l4.500 4L1 9z" fill="none" stroke="#777" stroke-width="1"/></svg>
<div class="ni" style="left:57.3px;top:762px">2.2.<span style="display:inline-block;width:3.800px"></span>QHSE保证措施</div>
<div class="ni" style="left:41.3px;top:783px">3.<span style="display:inline-block;width:3.800px"></span>技术服务承诺（主要说明服务质量等）</div>
<svg style="left:8.5px;top:810px" width="7" height="7" viewBox="0 0 7 7"><path d="M6.500 0v6.500h-6.500z" fill="#444"/></svg>
<div class="ni" style="left:24.5px;top:804px">七、<span style="display:inline-block;width:4.500px"></span>资格审查资料</div>
<svg style="left:24.5px;top:831px" width="7" height="7" viewBox="0 0 7 7"><path d="M6.500 0v6.500h-6.500z" fill="#444"/></svg>
<div class="ni" style="left:41.3px;top:825px">1.<span style="display:inline-block;width:3.800px"></span>公司概况：</div>
<svg style="left:41px;top:850px" width="7" height="10" viewBox="0 0 7 10"><path d="M1 1l4.500 4L1 9z" fill="none" stroke="#777" stroke-width="1"/></svg>
<div class="ni" style="left:57.3px;top:846px">1.1.<span style="display:inline-block;width:3.800px"></span>投标人基本情况表</div>
<div class="ni" style="left:41.3px;top:867px">2.<span style="display:inline-block;width:3.800px"></span>近年财务状况表：</div>
<svg style="left:24.5px;top:894px" width="7" height="7" viewBox="0 0 7 7"><path d="M6.500 0v6.500h-6.500z" fill="#444"/></svg>
<div class="ni" style="left:41.3px;top:888px">3.<span style="display:inline-block;width:3.800px"></span>其他：</div>
<div class="ni" style="left:57.3px;top:909px">3.1.<span style="display:inline-block;width:3.800px"></span>违法、违规、重大安全事故及其他不良...</div>
<svg style="left:24.5px;top:936px" width="7" height="7" viewBox="0 0 7 7"><path d="M6.500 0v6.500h-6.500z" fill="#444"/></svg>
<div class="ni" style="left:41.3px;top:930px">4.<span style="display:inline-block;width:3.800px"></span>《初步评审》中响应的资料</div>
<div class="ni" style="left:57.3px;top:951px">4.1.<span style="display:inline-block;width:3.800px"></span>基本要求</div>
<div class="ni" style="left:57.3px;top:972px">4.2.<span style="display:inline-block;width:3.800px"></span>资质要求</div>
<!--/NAV-->
<!--DOC-->
<div class="abs" style="left:340px;top:151px;width:29px;height:27px;background:#d9d9d9"></div>
<div class="abs" style="left:344px;top:155px;width:21px;height:20px;background:#fdfdfd"></div>
<svg style="left:350px;top:162px" width="8" height="8" viewBox="0 0 8 8"><path d="M1.500 0.500v6h6" fill="none" stroke="#555" stroke-width="1.600"/></svg>
<div class="abs" style="left:614px;top:156px;width:1033px;height:16px;background:#fefefe"></div>
<div class="abs" style="left:614px;top:156px;width:124px;height:16px;background:#c8c8c8"></div>
<div class="abs" style="left:1525px;top:156px;width:122px;height:16px;background:#c8c8c8"></div>
<svg style="left:0;top:156px" width="1871" height="16" viewBox="0 0 1871 16"><text x="627.0" y="12" text-anchor="middle" font-family="Liberation Sans,sans-serif" font-size="9.500" fill="#555">6</text><text x="663.5" y="12" text-anchor="middle" font-family="Liberation Sans,sans-serif" font-size="9.500" fill="#555">4</text><text x="699.9" y="12" text-anchor="middle" font-family="Liberation Sans,sans-serif" font-size="9.500" fill="#555">2</text><text x="772.9" y="12" text-anchor="middle" font-family="Liberation Sans,sans-serif" font-size="9.500" fill="#555">2</text><text x="809.3" y="12" text-anchor="middle" font-family="Liberation Sans,sans-serif" font-size="9.500" fill="#555">4</text><text x="845.8" y="12" text-anchor="middle" font-family="Liberation Sans,sans-serif" font-size="9.500" fill="#555">6</text><text x="882.2" y="12" text-anchor="middle" font-family="Liberation Sans,sans-serif" font-size="9.500" fill="#555">8</text><text x="918.7" y="12" text-anchor="middle" font-family="Liberation Sans,sans-serif" font-size="9.500" fill="#555">10</text><text x="955.2" y="12" text-anchor="middle" font-family="Liberation Sans,sans-serif" font-size="9.500" fill="#555">12</text><text x="991.6" y="12" text-anchor="middle" font-family="Liberation Sans,sans-serif" font-size="9.500" fill="#555">14</text><text x="1028.1" y="12" text-anchor="middle" font-family="Liberation Sans,sans-serif" font-size="9.500" fill="#555">16</text><text x="1064.5" y="12" text-anchor="middle" font-family="Liberation Sans,sans-serif" font-size="9.500" fill="#555">18</text><text x="1101.0" y="12" text-anchor="middle" font-family="Liberation Sans,sans-serif" font-size="9.500" fill="#555">20</text><text x="1137.5" y="12" text-anchor="middle" font-family="Liberation Sans,sans-serif" font-size="9.500" fill="#555">22</text><text x="1173.9" y="12" text-anchor="middle" font-family="Liberation Sans,sans-serif" font-size="9.500" fill="#555">24</text><text x="1210.4" y="12" text-anchor="middle" font-family="Liberation Sans,sans-serif" font-size="9.500" fill="#555">26</text><text x="1246.8" y="12" text-anchor="middle" font-family="Liberation Sans,sans-serif" font-size="9.500" fill="#555">28</text><text x="1283.3" y="12" text-anchor="middle" font-family="Liberation Sans,sans-serif" font-size="9.500" fill="#555">30</text><text x="1319.8" y="12" text-anchor="middle" font-family="Liberation Sans,sans-serif" font-size="9.500" fill="#555">32</text><text x="1356.2" y="12" text-anchor="middle" font-family="Liberation Sans,sans-serif" font-size="9.500" fill="#555">34</text><text x="1392.7" y="12" text-anchor="middle" font-family="Liberation Sans,sans-serif" font-size="9.500" fill="#555">36</text><text x="1429.1" y="12" text-anchor="middle" font-family="Liberation Sans,sans-serif" font-size="9.500" fill="#555">38</text><text x="1465.6" y="12" text-anchor="middle" font-family="Liberation Sans,sans-serif" font-size="9.500" fill="#555">40</text><text x="1502.1" y="12" text-anchor="middle" font-family="Liberation Sans,sans-serif" font-size="9.500" fill="#555">42</text><text x="1538.5" y="12" text-anchor="middle" font-family="Liberation Sans,sans-serif" font-size="9.500" fill="#555">44</text><text x="1575.0" y="12" text-anchor="middle" font-family="Liberation Sans,sans-serif" font-size="9.500" fill="#555">46</text><text x="1611.4" y="12" text-anchor="middle" font-family="Liberation Sans,sans-serif" font-size="9.500" fill="#555">48</text><path d="M636.5 6v6M654.5 6v6M673.5 6v6M691.5 6v6M709.5 6v6M727.5 6v6M746.5 6v6M764.5 6v6M782.5 6v6M800.5 6v6M818.5 6v6M837.5 6v6M855.5 6v6M873.5 6v6M891.5 6v6M910.5 6v6M928.5 6v6M946.5 6v6M964.5 6v6M983.5 6v6M1001.5 6v6M1019.5 6v6M1037.5 6v6M1055.5 6v6M1074.5 6v6M1092.5 6v6M1110.5 6v6M1128.5 6v6M1147.5 6v6M1165.5 6v6M1183.5 6v6M1201.5 6v6M1219.5 6v6M1238.5 6v6M1256.5 6v6M1274.5 6v6M1292.5 6v6M1311.5 6v6M1329.5 6v6M1347.5 6v6M1365.5 6v6M1384.5 6v6M1402.5 6v6M1420.5 6v6M1438.5 6v6M1456.5 6v6M1475.5 6v6M1493.5 6v6M1511.5 6v6M1529.5 6v6M1548.5 6v6M1566.5 6v6M1584.5 6v6M1602.5 6v6M1621.5 6v6M1639.5 6v6M619.5 6v6" stroke="#555" stroke-width="1"/></svg>
<svg style="left:731px;top:153px" width="13" height="28" viewBox="0 0 13 28"><path d="M1.500 0.500h10v1.500l-5 5.500-5-5.500z" fill="#fefefe" stroke="#999"/><path d="M1.500 20.500v-2.500l5-5.500 5 5.500v2.500z" fill="#fefefe" stroke="#999"/><rect x="1.500" y="20.500" width="10" height="6" fill="#fefefe" stroke="#999"/></svg>
<svg style="left:1518px;top:162px" width="13" height="13" viewBox="0 0 13 13"><path d="M1.500 11.500v-4l5-5.500 5 5.500v4z" fill="#fefefe" stroke="#999"/></svg>
<div id="page"></div>
<div class="abs" style="left:615px;top:181px;width:1px;height:829px;background:#c8c8c8"></div>
<div class="abs" style="left:1647px;top:181px;width:1px;height:829px;background:#cfcfcf"></div>
<div class="abs" style="left:707px;top:249px;width:31px;height:1px;background:#b0b0b0"></div><div class="abs" style="left:737px;top:219px;width:1px;height:31px;background:#b0b0b0"></div>
<div class="abs" style="left:1525px;top:249px;width:31px;height:1px;background:#b0b0b0"></div><div class="abs" style="left:1525px;top:219px;width:1px;height:31px;background:#b0b0b0"></div>
<div class="dl" style="left:775px;top:250.5px;--e:0.000px;height:41.0px">二、岗位职责<i class="pm">↵</i></div>
<div class="dl" style="left:775px;top:291.2px;--e:0.000px;height:41.0px"><i class="h">1</i><i class="h">.</i>安全生产责任制<i class="h">(</i>一岗双责<i class="h">)</i><i class="pm">↵</i></div>
<div class="dl" style="left:775px;top:331.8px;--e:0.263px;height:41.0px">进一步加强安全生产管理工作，提高安全生产目标管理责任意识，切实落实<i class="f">　</i>各级领导和各部</div>
<div class="dl" style="left:738px;top:372.5px;--e:0.274px;height:41.0px">门安全生产工作职责，根据《中华人民共和国安全生产法》及有关安全法律法规，结合公司安全生</div>
<div class="dl" style="left:738px;top:413.2px;--e:0.000px;height:41.0px">产工作实际，制定安全生产责任制。<i class="pm">↵</i></div>
<div class="dl" style="left:775px;top:453.9px;--e:0.000px;height:41.0px"><i class="h">1</i><i class="h">.</i><i class="h">1</i><i class="h">.</i><i class="q">“</i>一岗双责<i class="q">”</i>制度涵义<i class="pm">↵</i></div>
<div class="dl" style="left:775px;top:494.5px;--e:0.263px;height:41.0px">安全生产实行。<i class="q">“</i>一岗双责<i class="q">”</i>制度是指公司各级领导、各部门，各岗位人员<i class="f">　</i>不仅要完成本职</div>
<div class="dl" style="left:738px;top:535.2px;--e:0.262px;height:41.0px">范围内的业务工作，同时承担业务职责范围内的安全生产目标管理<i class="h"> </i>工作，按照<i class="q">“</i>谁主管、<i class="h"> </i>谁负</div>
<div class="dl" style="left:738px;top:575.9px;--e:0.262px;height:41.0px">责<i class="q">”</i>的原则履行安全生产职责。各部门负责人<i class="h">(</i><span class="wavy">含主持</span><i class="f">　</i>工作<i class="h">)</i>是本部门安全生产工作的第一责任</div>
<div class="dl" style="left:738px;top:616.5px;--e:0.267px;height:41.0px">人，<i class="h"> </i>对安全生产工作负全面责任：分管领导是安全生产工作的主要负责人，<i class="h"> </i>相关部门负责人是本</div>
<div class="dl" style="left:738px;top:657.2px;--e:0.267px;height:41.0px">部门安全生产的直接领导者，对分管业务内的安全生产工作负直接领导责任。按照<i class="h" style="font-style:italic">&quot;</i>谁主管、<i class="h"> </i>谁负</div>
<div class="dl" style="left:738px;top:697.9px;--e:0.239px;height:41.0px">责。、<i class="h"> </i><i class="h" style="font-style:italic">&quot;</i>谁<i class="h"> </i>审批、谁负责<i class="h" style="font-style:italic">&quot;</i>的原则，要切实履行安全生产责任制，<i class="h"> </i>抓好分管工作范围内的安全生</div>
<div class="dl" style="left:738px;top:738.5px;--e:0.000px;height:41.0px">产工作。<i class="pm">↵</i></div>
<div class="dl" style="left:775px;top:779.2px;--e:0.000px;height:41.0px"><i class="h">1</i><i class="h">.</i><i class="h">2</i><i class="h">.</i>领导岗位安全责任<i class="pm">↵</i></div>
<div class="dl" style="left:775px;top:819.9px;--e:0.000px;height:41.0px"><i class="h">1</i><i class="h">.</i><i class="h">2</i><i class="h">.</i><i class="h">1</i><i class="h">.</i>主要负责人安全生产主要职责<i class="pm">↵</i></div>
<div class="dl" style="left:775px;top:860.6px;--e:0.256px;height:41.0px">（<i class="h">1</i>）全面主持本单位的生产经营管理工作，<i class="h"> </i>对公司的安全生产工作与员工的职业健康负全面</div>
<div class="dl" style="left:738px;top:901.2px;--e:0.000px;height:41.0px">责任。<i class="pm">↵</i></div>
<div class="dl" style="left:775px;top:941.9px;--e:0.250px;height:41.0px">（<i class="h">2</i>）统筹制定公司的发展规划，建立与实施公司总的管理方针和管理目标，<i class="h"> </i>确保公司按照</div>
<div class="dl" style="left:738px;top:982.6px;--e:0.202px;height:27.4px"><i class="h hc">C</i><i class="h hc">B</i><i class="h">/</i><i class="h hc">T</i><i class="h">1</i><i class="h">9</i><i class="h">0</i><i class="h">0</i><i class="h">1</i><i class="h hy">-</i><i class="h">2</i><i class="h">0</i><i class="h">2</i><i class="h">1</i><i class="h hc">&amp;</i><i class="h hc">G</i><i class="h hc">B</i><i class="h">/</i><i class="h hc">T</i><i class="h">2</i><i class="h">8</i><i class="h">0</i><i class="h">0</i><i class="h">1</i><i class="h hy">-</i><i class="h">2</i><i class="h">0</i><i class="h">2</i><i class="h">1</i><i class="h"> </i>管理体系标准的要求，建立、实施公司的管理体系并持续改进其</div>
<!--/DOC-->
<div id="status"></div>
<!--STATUS-->
<div class="st" style="left:2px;word-spacing:1.5px">第 14 页，共 399 页</div>
<div class="st" style="left:132px;word-spacing:1.5px;letter-spacing:0.1px">56188 个字</div>
<svg style="left:213px;top:1014px" width="17" height="14" viewBox="0 0 17 14"><path d="M7.500 2.500C6 1.500 3.500 1.300 1.500 1.500v10c2-.200 4.500 0 6 1zM7.500 2.500v10.500" fill="none" stroke="#777" stroke-width="1"/><path d="M7.500 2.500c1-.700 2.200-1 3.500-1" fill="none" stroke="#777" stroke-width="1"/><path d="M10.500 3.500l4.500 5M15 3.500l-4.500 5" stroke="#777" stroke-width="1.100"/></svg>
<div class="st" style="left:245.5px;letter-spacing:-0.15px">简体中文(中国大陆)</div>
<div class="st" style="left:368px;word-spacing:1px">修订: 关闭</div>
<svg style="left:441px;top:1014px" width="17" height="15" viewBox="0 0 17 15"><path d="M9.500 2.200A5.300 5.300 0 1 0 11.500 9" fill="none" stroke="#555" stroke-width="1.200"/><path d="M6 3.500v4l3.500 2" fill="none" stroke="#555" stroke-width="1.200"/><path d="M9.500 8l6 6M15.500 8l-6 6" stroke="#444" stroke-width="1.700"/></svg>
<div class="st" style="left:460.5px;font-weight:bold;letter-spacing:0;word-spacing:1px;color:#3b3b3b">辅助功能: 调查</div>
<div class="abs" style="left:1781px;top:1011px;width:40px;height:21px;background:#c6c6c6"></div>
<svg style="left:1754px;top:1014px" width="13" height="14" viewBox="0 0 14 14" preserveAspectRatio="none"><path d="M0.500 0.500h5c.8 0 1.300.4 1.500 1 .2-.6.700-1 1.500-1h5v10h-13zM7 1.500v12" fill="none" stroke="#666" stroke-width="1"/><path d="M2 2.500h3.500M2 4.500h3.500M2 6.500h3.500M2 8.500h3.500M8.500 2.500H12M8.500 4.500H12M8.500 6.500H12M8.500 8.500H12" stroke="#666" stroke-width="1"/><path d="M5.500 11.500l1.500 2 1.500-2" fill="#666"/></svg>
<svg style="left:1794px;top:1014px" width="14" height="14" viewBox="0 0 14 14"><rect x="0.500" y="0.500" width="13" height="12" fill="none" stroke="#666"/><path d="M2 2.500h10M2 4.500h10M2 6.500h10M2 8.500h10M2 10.500h10" stroke="#666" stroke-width="1"/></svg>
<svg style="left:1834px;top:1014px" width="15" height="14" viewBox="0 0 15 14"><path d="M7.500 10.500h-7v-10h11v5" fill="none" stroke="#666" stroke-width="1"/><path d="M2.500 3.500h7M2.500 5.500h6M2.500 7.500h4" stroke="#666" stroke-width="1"/><circle cx="10.500" cy="9.500" r="4" fill="#666"/><path d="M8.500 8c1 .5 1.500 1.500 1 2.500M11 7.200c.3.800 1.200 1.300 2.200 1.100M10.500 12c.2-1 .9-1.500 1.800-1.600" fill="none" stroke="#f3f3f3" stroke-width="0.900"/></svg>
<!--/STATUS-->
<div id="taskbar"></div>
<div class="abs" style="left:726px;top:1032px;width:48px;height:5px;background:#515d64"></div>
<div class="abs" style="left:824px;top:1032px;width:48px;height:5px;background:#a8652e"></div>
</body>
</html>
